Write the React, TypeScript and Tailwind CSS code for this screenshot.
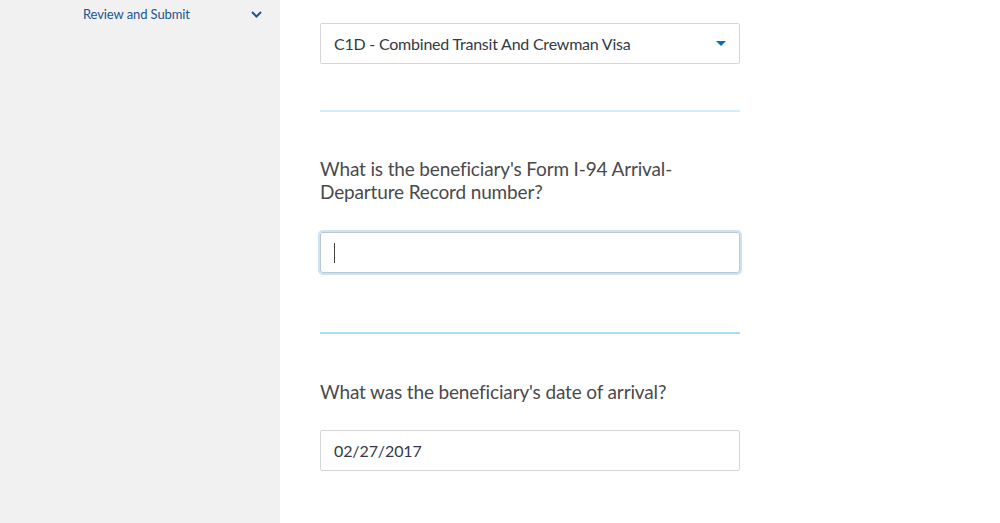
import React from 'react';

const font = { fontFamily: 'Lato, "Noto Sans", sans-serif' };

const App: React.FC = () => {
    return (
        <div className="flex h-[523px] w-full bg-white overflow-hidden" style={font}>
            <aside className="w-[280px] shrink-0 bg-[#f1f1f1]">
                <div className="flex items-center justify-between pl-[83px] pr-[18px] pt-[5px]">
                    <span className="text-[13px] leading-[18px] text-[#205493] tracking-[-0.1px]">Review and Submit</span>
                    <svg width="11" height="7" viewBox="0 0 11 7" fill="none">
                        <path d="M1 1l4.5 4.5L10 1" stroke="#205493" strokeWidth="2" />
                    </svg>
                </div>
            </aside>
            <main className="flex-1 pl-[40px]">
                <div className="w-[420px] flex flex-col">
                    <div className="mt-[23px] h-[41px] border border-[#d6d7d9] rounded-[2px] flex items-center justify-between pl-[13px] pr-[13px]">
                        <span className="text-[16px] text-[#323a45] tracking-[-0.22px]">C1D - Combined Transit And Crewman Visa</span>
                        <svg width="10" height="6" viewBox="0 0 10 6">
                            <path d="M0 0h10L5 5z" fill="#0071bc" />
                        </svg>
                    </div>
                    <div className="mt-[46px] h-[2px] bg-[#d3ebfa]" />
                    <h2 className="mt-[45px] text-[19px] leading-[23px] text-[#4a4a4a] font-normal tracking-[-0.15px]">
                        What is the beneficiary's Form I-94 Arrival-
                        <br />
                        Departure Record number?
                    </h2>
                    <div className="mt-[29px] h-[41px] border border-[#b9c8d6] rounded-[3px] shadow-[0_0_0_2px_#cfe2f1] flex items-center pl-[13px]">
                        <span className="block w-px h-[20px] bg-[#444]" />
                    </div>
                    <div className="mt-[59px] h-[2px] bg-[#a9ddf6]" />
                    <h2 className="mt-[46px] text-[19px] leading-[23px] text-[#4a4a4a] font-normal tracking-[-0.15px]">
                        What was the beneficiary's date of arrival?
                    </h2>
                    <div className="mt-[27px] h-[41px] border border-[#d6d7d9] rounded-[2px] flex items-center pl-[13px]">
                        <span className="text-[16px] text-[#323a45] tracking-[-0.1px]">02/27/2017</span>
                    </div>
                </div>
            </main>
        </div>
    );
};

export default App;
